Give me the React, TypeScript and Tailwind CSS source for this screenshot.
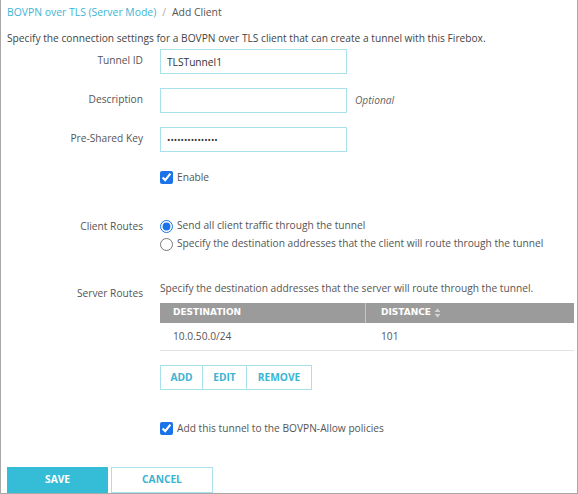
import React from 'react';

function SortIcon() {
    return (
        <svg width="7" height="10" viewBox="0 0 7 10" className="ml-[3px] inline-block">
            <path d="M3.5 0.5 L6.5 4 H0.5 Z" fill="#d4d4d4" />
            <path d="M3.5 9.5 L6.5 6 H0.5 Z" fill="#d4d4d4" />
        </svg>
    );
}

function FieldRow({ label, children, className = '' }: { label: string; children: React.ReactNode; className?: string }) {
    return (
        <div className={`flex items-start ${className}`}>
            <div className="w-[142px] shrink-0 text-right leading-[23px] text-[#555]">{label}</div>
            <div className="ml-[17px] flex items-center">{children}</div>
        </div>
    );
}

export default function App() {
    return (
        <div className="w-[578px] h-[494px] flex flex-col bg-white border-x border-b border-[#a8a8a8] font-['Open_Sans',sans-serif] text-[10.2px] text-[#555] overflow-hidden">

            {/* Breadcrumb */}
            <div className="px-[6px] pt-[4px] leading-[16px] text-[10.4px]">
                <span className="text-[#3db4d4]">BOVPN over TLS (Server Mode)</span>
                <span className="text-[#aaa] mx-[6px]">/</span>
                <span className="text-[#555]">Add Client</span>
            </div>

            <p className="px-[6px] mt-[10px] leading-[16px] text-[#444]">
                Specify the connection settings for a BOVPN over TLS client that can create a tunnel with this Firebox.
            </p>

            {/* Text fields */}
            <FieldRow label="Tunnel ID" className="mt-[3px]">
                <input
                    type="text"
                    defaultValue="TLSTunnel1"
                    className="w-[187px] h-[25px] border border-[#a8e0ec] px-[6px] text-[10.2px] text-[#333] outline-none"
                />
            </FieldRow>
            <FieldRow label="Description" className="mt-[14px]">
                <input type="text" className="w-[187px] h-[25px] border border-[#a8e0ec] px-[6px] outline-none" />
                <span className="ml-[8px] italic text-[#666]">Optional</span>
            </FieldRow>
            <FieldRow label="Pre-Shared Key" className="mt-[14px]">
                <input
                    type="password"
                    defaultValue="secretpassword1"
                    className="w-[187px] h-[25px] border border-[#a8e0ec] px-[6px] text-[9px] text-[#333] outline-none"
                />
            </FieldRow>

            {/* Enable */}
            <label className="ml-[159px] mt-[18px] flex items-center gap-[4px] leading-[14px]">
                <input type="checkbox" defaultChecked className="m-0 w-[13px] h-[13px] accent-[#1a73e8]" />
                <span>Enable</span>
            </label>

            {/* Client Routes */}
            <div className="flex items-start mt-[33px]">
                <div className="w-[142px] shrink-0 text-right leading-[18px]">Client Routes</div>
                <div className="ml-[17px] flex flex-col">
                    <label className="flex items-center gap-[4px] h-[18px]">
                        <input type="radio" name="routes" defaultChecked className="m-0 w-[13px] h-[13px] accent-[#1a73e8]" />
                        <span>Send all client traffic through the tunnel</span>
                    </label>
                    <label className="flex items-center gap-[4px] h-[18px]">
                        <input type="radio" name="routes" className="m-0 w-[13px] h-[13px] accent-[#1a73e8]" />
                        <span>Specify the destination addresses that the client will route through the tunnel</span>
                    </label>
                </div>
            </div>

            {/* Server Routes */}
            <div className="flex items-start mt-[27px]">
                <div className="w-[142px] shrink-0 text-right leading-[16px] pt-[5px]">Server Routes</div>
                <div className="ml-[17px] flex flex-col">
                    <p className="leading-[16px]">Specify the destination addresses that the server will route through the tunnel.</p>

                    <div className="mt-[7px] w-[414px]">
                        <div className="flex h-[20px] bg-[#9b9b9b] text-white font-bold text-[9px] uppercase font-['DejaVu_Sans',sans-serif]">
                            <div className="w-[205px] flex items-center pl-[13px]">Destination</div>
                            <div className="flex-1 flex items-center pl-[15px] border-l border-[#c6c6c6]">
                                Distance
                                <SortIcon />
                            </div>
                        </div>
                        <div className="flex h-[28px] border-b border-[#e3e3e3] text-[#555]">
                            <div className="w-[205px] flex items-center pl-[13px]">10.0.50.0/24</div>
                            <div className="flex-1 flex items-center pl-[16px]">101</div>
                        </div>
                    </div>

                    <div className="mt-[14px] flex h-[25px] font-bold text-[#3ab4d2] text-[10.2px]">
                        <button className="w-[43px] border border-[#a8e0ec] uppercase">Add</button>
                        <button className="w-[44px] border-y border-r border-[#a8e0ec] uppercase">Edit</button>
                        <button className="w-[65px] border-y border-r border-[#a8e0ec] uppercase">Remove</button>
                    </div>

                    <label className="mt-[31px] flex items-center gap-[4px] leading-[14px]">
                        <input type="checkbox" defaultChecked className="m-0 w-[13px] h-[13px] accent-[#1a73e8]" />
                        <span>Add this tunnel to the BOVPN-Allow policies</span>
                    </label>
                </div>
            </div>

            {/* Footer */}
            <div className="mt-auto ml-[6px] flex gap-[3px] h-[26px] font-bold text-[10.2px]">
                <button className="w-[101px] bg-[#35bcd6] text-white uppercase">Save</button>
                <button className="w-[102px] border border-[#a8e0ec] text-[#3ab4d2] uppercase">Cancel</button>
            </div>
        </div>
    );
}
